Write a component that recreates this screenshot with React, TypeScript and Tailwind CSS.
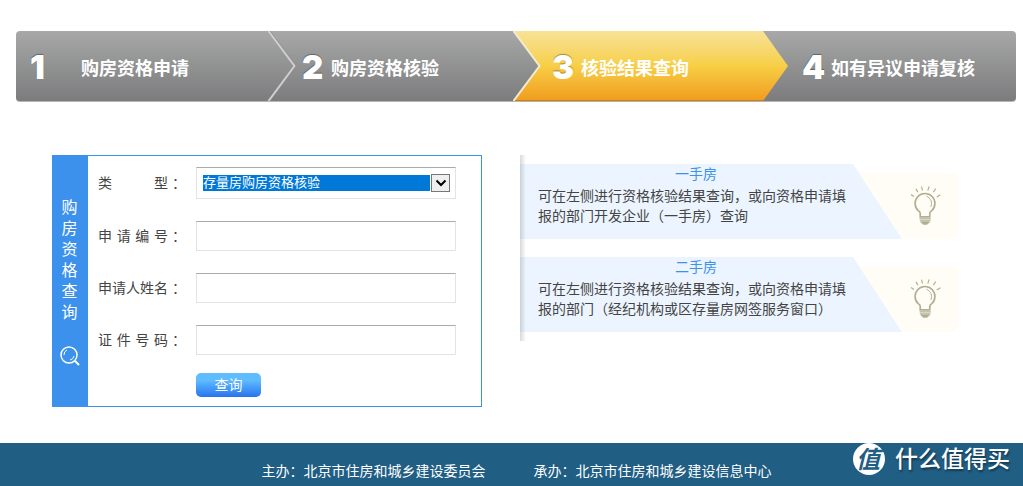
import React from 'react';

interface Step {
  no: number;
  title: string;
  active?: boolean;
}

interface Tip {
  title: string;
  text: string;
}

const steps: Step[] = [
  { no: 1, title: '购房资格申请' },
  { no: 2, title: '购房资格核验' },
  { no: 3, title: '核验结果查询', active: true },
  { no: 4, title: '如有异议申请复核' },
];

const fields = [
  { id: 'applyNo', label: '申 请 编 号' },
  { id: 'applyName', label: '申请人姓名' },
  { id: 'certNo', label: '证 件 号 码' },
];

const tips: Tip[] = [
  {
    title: '一手房',
    text: '可在左侧进行资格核验结果查询，或向资格申请填报的部门开发企业（一手房）查询',
  },
  {
    title: '二手房',
    text: '可在左侧进行资格核验结果查询，或向资格申请填报的部门（经纪机构或区存量房网签服务窗口）',
  },
];

const BulbIcon: React.FC = () => (
  <svg className="h-[42px] w-[33px]" viewBox="0 0 100 126" fill="none" stroke="#b1ae92" aria-hidden="true">
    <path strokeWidth="3.500" d="M6 28 15 34M21 11 27 21M38 4 41 16M61 4 57 16M81 10 74 21M95 29 84 36" />
    <path strokeWidth="5" d="M34 96V85C34 81 31 79 28 77A30 30 0 1 1 69 77C66 79 63 81 63 85V96Z" />
    <path strokeWidth="3" d="M53 33C66 40 72 52 66 66" />
    <path strokeWidth="4" d="M32 102H66M33 108H65M36 113H62" />
    <path fill="#b1ae92" stroke="none" d="M39 114H59L55 120H43Z" />
  </svg>
);

const SearchIcon: React.FC = () => (
  <svg className="h-5 w-5" viewBox="0 0 20 20" fill="none" stroke="#fff" aria-hidden="true">
    <circle cx="9" cy="9" r="8" strokeWidth="1.5" />
    <path strokeWidth="1" d="M4 9A5 5 0 0 1 7 4M14 10A5 5 0 0 1 10 14" />
    <path strokeWidth="2" d="M15 15 19 19" />
  </svg>
);

const StepItem: React.FC<{ step: Step }> = ({ step }) => (
  <li className="relative flex items-center pt-0.5">
    {step.active && (
      <span className="absolute inset-y-0 -left-[3px] -right-[22px] border-b border-[#c97f14] bg-linear-to-b from-[#f8e296] via-[#f7cf45] to-[#f09d1c] [clip-path:polygon(0_0,calc(100%-25px)_0,100%_50%,calc(100%-25px)_100%,0_100%,26px_50%)]" />
    )}
    {step.no === 2 && (
      <svg className="absolute left-0 top-0 h-full w-8" viewBox="0 0 32 71" preserveAspectRatio="none" fill="none" aria-hidden="true">
        <path d="M4 0 30 35.500 4 71" stroke="#888" strokeWidth="1" />
        <path d="M2.500 0 28.500 35.500 2.500 71" stroke="#cfcfcf" strokeWidth="2" />
      </svg>
    )}
    {step.active && (
      <svg className="absolute -left-[3px] top-0 h-full w-8" viewBox="0 0 32 71" preserveAspectRatio="none" fill="none" aria-hidden="true">
        <path d="M0.500 0 26.500 35.500 0.500 71" stroke="#f4ead0" strokeWidth="2" />
      </svg>
    )}
    <span
      className={
        step.no === 1
          ? 'relative w-[65px] pl-3.5 font-[Inter,sans-serif] text-[33px] leading-9 font-black text-white [text-shadow:0_-1px_1px_rgba(0,0,0,0.35)]'
          : 'relative w-[65px] pl-9 font-[Inter,sans-serif] text-[33px] leading-9 font-black text-white [text-shadow:0_-1px_1px_rgba(0,0,0,0.35)]'
      }
    >
      {step.no}
    </span>
    <span className="relative text-lg font-bold whitespace-nowrap text-white">{step.title}</span>
  </li>
);

const FieldLabel: React.FC<{ id: string; text: string }> = ({ id, text }) => (
  <label htmlFor={id} className="flex w-[98px] shrink-0 gap-1 pb-0.5 text-sm leading-5 text-[#444]">
    <span className="w-[70px] [text-align-last:justify]">{text}</span>
    <span>：</span>
  </label>
);

const QueryForm: React.FC = () => (
  <section className="flex w-[430px] shrink-0 border border-[#3b91ec] bg-white">
    <div className="flex w-[35px] flex-col items-center bg-[#3b91ec] pt-10 pr-0.5 text-white">
      <h2 className="w-4 text-base leading-[21px]">购房资格查询</h2>
      <div className="mt-6">
        <SearchIcon />
      </div>
    </div>
    <form className="flex-1 pt-[11px] pr-[25px] pb-[9px] pl-2.5" onSubmit={(e) => e.preventDefault()}>
      <div className="flex flex-col gap-[22px]">
        <div className="flex items-center">
          <FieldLabel id="houseType" text="类 型" />
          <div className="flex h-8 flex-1 items-center gap-px border border-t-[#aaa] border-r-[#e3e3e3] border-b-[#e3e3e3] border-l-[#e3e3e3] pr-[5px] pl-1.5">
            <select
              id="houseType"
              className="h-4 min-w-0 flex-1 appearance-none bg-[#0078d7] pb-0.5 text-[13px] leading-[14px] text-white outline-none"
            >
              <option>存量房购房资格核验</option>
            </select>
            <span className="pointer-events-none flex h-[18px] w-[19px] items-center justify-center border border-[#777] bg-[#efefef]">
              <svg className="h-2 w-3" viewBox="0 0 12 8" fill="none" stroke="#000" strokeWidth="2" aria-hidden="true">
                <path d="M1.500 1.500 6 6 10.500 1.500" />
              </svg>
            </span>
          </div>
        </div>
        {fields.map((field) => (
          <div key={field.id} className="flex items-center">
            <FieldLabel id={field.id} text={field.label} />
            <input
              id={field.id}
              type="text"
              className="h-[30px] min-w-0 flex-1 border border-t-[#aaa] border-r-[#e3e3e3] border-b-[#e3e3e3] border-l-[#e3e3e3] px-1.5 text-sm outline-none"
            />
          </div>
        ))}
      </div>
      <button
        type="submit"
        className="mt-[18px] ml-[98px] block h-6 w-[65px] rounded-[5px] bg-linear-to-b from-[#5fbcff] from-30% to-[#2a72ee] pb-0.5 text-sm leading-[22px] text-white"
      >
        查询
      </button>
    </form>
  </section>
);

const TipCard: React.FC<{ tip: Tip }> = ({ tip }) => (
  <article className="grid">
    <div className="col-start-1 row-start-1 mt-[9px] flex w-[100px] items-center justify-end justify-self-end rounded-r-md bg-[#fffdf5] pr-4">
      <BulbIcon />
    </div>
    <div className="col-start-1 row-start-1 mr-14 bg-[#ecf5ff] pr-12 pb-3.5 pl-[18px] [clip-path:polygon(0_0,calc(100%-49px)_0,100%_100%,0_100%)]">
      <h3 className="text-center text-sm leading-[19px] text-[#3b91ec]">{tip.title}</h3>
      <p className="mt-0.5 text-sm leading-5 text-[#444]">{tip.text}</p>
    </div>
  </article>
);

const App: React.FC = () => {
  return (
    <div className="flex min-h-screen flex-col bg-white font-['Noto_Sans_CJK_SC',sans-serif]">
      <ol className="mt-[31px] mr-[7px] ml-4 grid h-[71px] shrink-0 grid-cols-4 rounded-[4px] border-b border-[#b5b5b5] bg-linear-to-b from-[#a7a8a7] to-[#7c7c7e]">
        {steps.map((step) => (
          <StepItem key={step.no} step={step} />
        ))}
      </ol>

      <main className="mt-[53px] mb-9 flex items-start gap-[38px] pr-16 pl-[52px]">
        <QueryForm />
        <section className="relative flex max-w-[438px] min-w-0 flex-1 flex-col gap-[18px] py-[9px]">
          {tips.map((tip) => (
            <TipCard key={tip.title} tip={tip} />
          ))}
          <div className="absolute inset-y-0 left-0 w-1.5 bg-linear-to-r from-black/15 to-transparent" />
        </section>
      </main>

      <footer className="relative flex flex-1 justify-center gap-12 bg-[#205e84] pt-[17px] pb-1.5 pl-2.5 text-sm leading-5 text-white">
        <p>主办：北京市住房和城乡建设委员会</p>
        <p>承办：北京市住房和城乡建设信息中心</p>
        <div className="absolute top-0 right-[13px] flex items-center gap-2.5">
          <span className="flex h-8 w-8 items-center justify-center rounded-full bg-white pr-0.5 pb-0.5 text-2xl leading-7 font-bold text-[#205e84] italic">
            值
          </span>
          <span className="pb-1 text-[23px] leading-7 font-medium [text-shadow:1px_2px_2px_rgba(0,0,0,0.4)]">什么值得买</span>
        </div>
      </footer>
    </div>
  );
};

export default App;
